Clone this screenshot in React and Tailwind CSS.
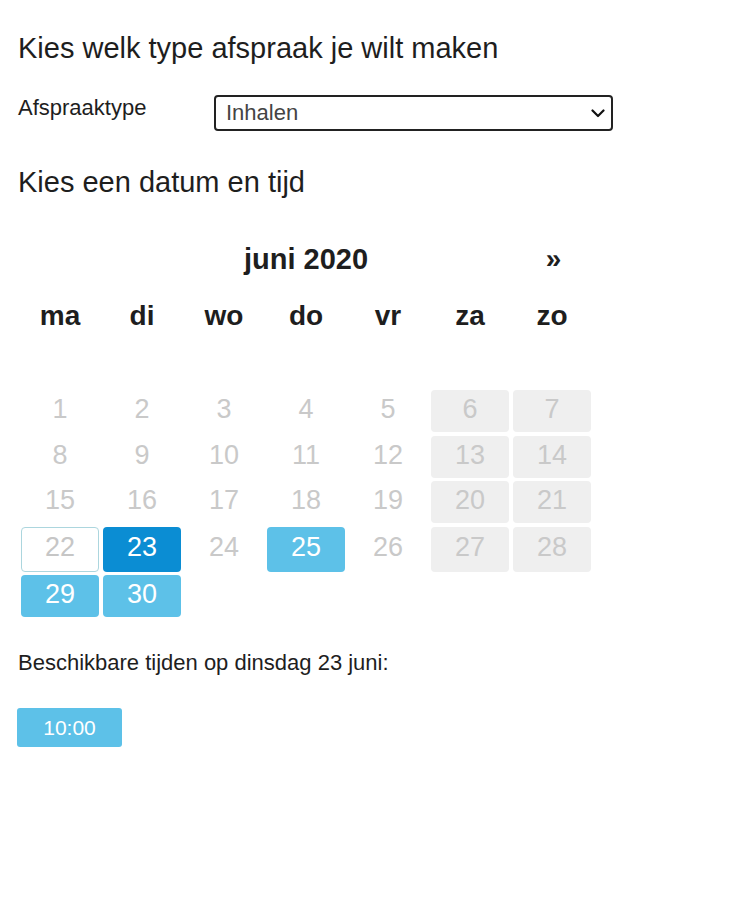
import React from "react";

const weekdays = ["ma", "di", "wo", "do", "vr", "za", "zo"];

const available = [25, 29, 30];
const selected = 23;
const today = 22;

function dayClass(d, col) {
  const base =
    "flex items-center justify-center rounded-[4px] text-[27px] leading-none pb-[3px]";
  if (d === selected) return `${base} bg-[#0b8dd3] text-white`;
  if (available.includes(d)) return `${base} bg-[#5dc1e8] text-white`;
  if (d === today)
    return `${base} bg-white border border-[#acd6de] text-[#c6c6c6]`;
  if (col >= 5) return `${base} bg-[#efefef] text-[#c9c9c9]`;
  return `${base} text-[#c9c9c9]`;
}

export default function App() {
  const days = Array.from({ length: 30 }, (_, i) => i + 1);
  return (
    <div
      className="min-h-[900px] w-[740px] bg-white text-[#1e1e1e] pl-[18px] pt-[31px]"
      style={{ fontFamily: '"Liberation Sans", Arial, sans-serif' }}
    >
      <h1 className="text-[29px] leading-[34px] font-normal">
        Kies welk type afspraak je wilt maken
      </h1>

      <div className="mt-[30px] flex items-start">
        <label className="w-[196px] text-[22px] leading-[25px]">
          Afspraaktype
        </label>
        <div className="w-[399px] h-[36px] border-2 border-[#222] rounded-[4px] flex items-center justify-between pl-[10px] pr-[6px]">
          <span className="text-[22px] leading-none text-[#444]">Inhalen</span>
          <svg width="14" height="9" viewBox="0 0 14 9" fill="none">
            <path
              d="M1.5 1.5 L7 7 L12.5 1.5"
              stroke="#111"
              strokeWidth="2.2"
              strokeLinecap="round"
              strokeLinejoin="round"
            />
          </svg>
        </div>
      </div>

      <h2 className="mt-[34px] text-[29px] leading-[34px] font-normal">
        Kies een datum en tijd
      </h2>

      <div className="mt-[37px] ml-[3px] w-[570px]">
        <div className="grid grid-cols-[repeat(7,78px)] gap-x-[4px] h-[46px] items-center font-bold">
          <div></div>
          <div className="col-span-5 text-center text-[29px] leading-none">
            juni 2020
          </div>
          <div className="text-center text-[28px] leading-none pl-[3px]">»</div>
        </div>

        <div className="mt-[11px] grid grid-cols-[repeat(7,78px)] gap-x-[4px] h-[46px] items-center font-bold">
          {weekdays.map((w) => (
            <div key={w} className="text-center text-[28px] leading-none">
              {w}
            </div>
          ))}
        </div>

        <div className="h-[51px]"></div>

        <div className="grid grid-cols-[repeat(7,78px)] grid-rows-[42px_42px_42px_45px_42px] gap-x-[4px] gap-y-[3.5px]">
          {days.map((d, i) => (
            <div key={d} className={dayClass(d, i % 7)}>
              {d}
            </div>
          ))}
        </div>
      </div>

      <p className="mt-[33px] text-[22px] leading-[25px]">
        Beschikbare tijden op dinsdag 23 juni:
      </p>

      <button className="mt-[33px] -ml-[1px] w-[105px] h-[39px] rounded-[3px] bg-[#5dc1e8] text-white text-[21px] leading-none flex items-center justify-center">
        10:00
      </button>
    </div>
  );
}
